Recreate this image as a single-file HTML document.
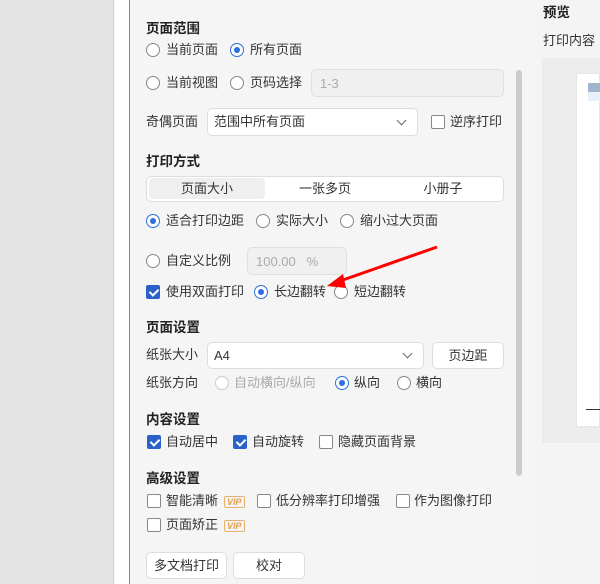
<!DOCTYPE html>
<html><head><meta charset="utf-8"><style>
*{box-sizing:border-box;margin:0;padding:0}
body{width:600px;height:584px;overflow:hidden;position:relative;background:#f4f4f4;font-family:"Liberation Sans","Noto Sans CJK SC",sans-serif;font-size:13px;color:#333}
.a{position:absolute;white-space:nowrap;line-height:15px}
.h{font-weight:bold;font-size:13.5px;color:#222}
.r{position:absolute;width:14px;height:14px;border:1px solid #888;border-radius:50%;background:#fff}
.r.on{border-color:#2a6fdb}
.r.on::after{content:"";position:absolute;left:3px;top:3px;width:6px;height:6px;border-radius:50%;background:#2a6fdb}
.r.dis{border-color:#ccc}
.c{position:absolute;width:14px;height:14px;border:1px solid #888;border-radius:2px;background:#fff}
.c.on{background:#2a62c9;border-color:#2a62c9}
.c.on::after{content:"";position:absolute;left:4px;top:1px;width:4px;height:7px;border:solid #fff;border-width:0 2px 2px 0;transform:rotate(45deg)}
.box{position:absolute;border:1px solid #ddd;border-radius:5px;background:#fff}
.dis-box{background:#f0f0f0;border-color:#e0e0e0;color:#aaa}
.chev{position:absolute;width:7px;height:7px;border:solid #666;border-width:0 1.3px 1.3px 0;transform:rotate(45deg)}
.vip{position:absolute;font-size:9px;font-weight:bold;color:#e0a050;border:1px solid #e8b070;border-radius:2px;padding:0 2px;line-height:10px;font-style:italic}
.btn{position:absolute;border:1px solid #ddd;border-radius:5px;background:#fff;text-align:center}
</style></head><body>
<div class="a" style="left:0;top:0;width:114px;height:584px;background:#e3e3e3;border-right:1px solid #d0d0d0"></div>
<div class="a" style="left:115px;top:0;width:14px;height:584px;background:#fff"></div>
<div class="a" style="left:129px;top:0;width:1px;height:584px;background:#888"></div>
<div class="a" style="left:130px;top:0;width:400px;height:584px;background:#f5f5f5"></div>
<div class="a" style="left:516px;top:70px;width:6px;height:406px;background:#ccc;border-radius:3px"></div>

<div class="a h" style="left:146px;top:21px">页面范围</div>
<div class="r" style="left:146px;top:43px"></div><div class="a" style="left:166px;top:42px">当前页面</div>
<div class="r on" style="left:230px;top:43px"></div><div class="a" style="left:250px;top:42px">所有页面</div>
<div class="r" style="left:146px;top:76px"></div><div class="a" style="left:166px;top:75px">当前视图</div>
<div class="r" style="left:230px;top:76px"></div><div class="a" style="left:250px;top:75px">页码选择</div>
<div class="box dis-box" style="left:311px;top:69px;width:193px;height:28px"></div><div class="a" style="left:320px;top:76px;color:#aaa">1-3</div>
<div class="a" style="left:146px;top:114px">奇偶页面</div>
<div class="box" style="left:207px;top:108px;width:211px;height:28px"></div><div class="a" style="left:214px;top:114px">范围中所有页面</div><div class="chev" style="left:398px;top:117px"></div>
<div class="c" style="left:431px;top:115px"></div><div class="a" style="left:450px;top:114px">逆序打印</div>

<div class="a h" style="left:146px;top:154px">打印方式</div>
<div class="box" style="left:146px;top:176px;width:358px;height:26px"></div>
<div class="a" style="left:149px;top:178px;width:116px;height:21px;background:#efefef;border-radius:4px"></div>
<div class="a" style="left:149px;top:181px;width:116px;text-align:center">页面大小</div>
<div class="a" style="left:266px;top:181px;width:118px;text-align:center">一张多页</div>
<div class="a" style="left:384px;top:181px;width:118px;text-align:center">小册子</div>
<div class="r on" style="left:146px;top:214px"></div><div class="a" style="left:166px;top:213px">适合打印边距</div>
<div class="r" style="left:256px;top:214px"></div><div class="a" style="left:276px;top:213px">实际大小</div>
<div class="r" style="left:340px;top:214px"></div><div class="a" style="left:360px;top:213px">缩小过大页面</div>
<div class="r" style="left:146px;top:254px"></div><div class="a" style="left:166px;top:253px">自定义比例</div>
<div class="box dis-box" style="left:247px;top:247px;width:100px;height:28px"></div><div class="a" style="left:256px;top:254px;color:#aaa">100.00&nbsp;&nbsp; %</div>
<div class="c on" style="left:146px;top:285px"></div><div class="a" style="left:166px;top:284px">使用双面打印</div>
<div class="r on" style="left:254px;top:285px"></div><div class="a" style="left:274px;top:284px">长边翻转</div>
<div class="r" style="left:334px;top:285px"></div><div class="a" style="left:354px;top:284px">短边翻转</div>
<svg class="a" style="left:0;top:0" width="600" height="584"><line x1="437" y1="247" x2="340" y2="281" stroke="#f00" stroke-width="3"/><polygon points="327,286 343,274 346,288" fill="#f00"/></svg>

<div class="a h" style="left:146px;top:320px">页面设置</div>
<div class="a" style="left:146px;top:347px">纸张大小</div>
<div class="box" style="left:207px;top:342px;width:217px;height:27px"></div><div class="a" style="left:214px;top:348px">A4</div><div class="chev" style="left:404px;top:350px"></div>
<div class="btn" style="left:432px;top:342px;width:72px;height:27px;line-height:25px">页边距</div>
<div class="a" style="left:146px;top:375px">纸张方向</div>
<div class="r dis" style="left:215px;top:376px"></div><div class="a" style="left:234px;top:375px;color:#aaa">自动横向/纵向</div>
<div class="r on" style="left:335px;top:376px"></div><div class="a" style="left:354px;top:375px">纵向</div>
<div class="r" style="left:397px;top:376px"></div><div class="a" style="left:416px;top:375px">横向</div>

<div class="a h" style="left:146px;top:412px">内容设置</div>
<div class="c on" style="left:147px;top:435px"></div><div class="a" style="left:166px;top:434px">自动居中</div>
<div class="c on" style="left:233px;top:435px"></div><div class="a" style="left:252px;top:434px">自动旋转</div>
<div class="c" style="left:319px;top:435px"></div><div class="a" style="left:338px;top:434px">隐藏页面背景</div>

<div class="a h" style="left:146px;top:471px">高级设置</div>
<div class="c" style="left:147px;top:494px"></div><div class="a" style="left:166px;top:493px">智能清晰</div><div class="vip" style="left:224px;top:496px">VIP</div>
<div class="c" style="left:257px;top:494px"></div><div class="a" style="left:276px;top:493px">低分辨率打印增强</div>
<div class="c" style="left:396px;top:494px"></div><div class="a" style="left:414px;top:493px">作为图像打印</div>
<div class="c" style="left:147px;top:518px"></div><div class="a" style="left:166px;top:517px">页面矫正</div><div class="vip" style="left:224px;top:520px">VIP</div>
<div class="btn" style="left:146px;top:552px;width:81px;height:27px;line-height:25px">多文档打印</div>
<div class="btn" style="left:233px;top:552px;width:72px;height:27px;line-height:25px">校对</div>

<div class="a h" style="left:543px;top:5px">预览</div>
<div class="a" style="left:543px;top:33px">打印内容</div>
<div class="a" style="left:542px;top:58px;width:58px;height:385px;background:#ececec"></div>
<div class="a" style="left:576px;top:73px;width:24px;height:354px;background:#fff;border:1px solid #e6e6e6"></div>
<div class="a" style="left:588px;top:83px;width:12px;height:9px;background:#a0b4cc"></div>
<div class="a" style="left:588px;top:92px;width:12px;height:9px;background:#e8f0fa"></div>
<div class="a" style="left:586px;top:409px;width:14px;height:1px;background:#333"></div>
</body></html>
